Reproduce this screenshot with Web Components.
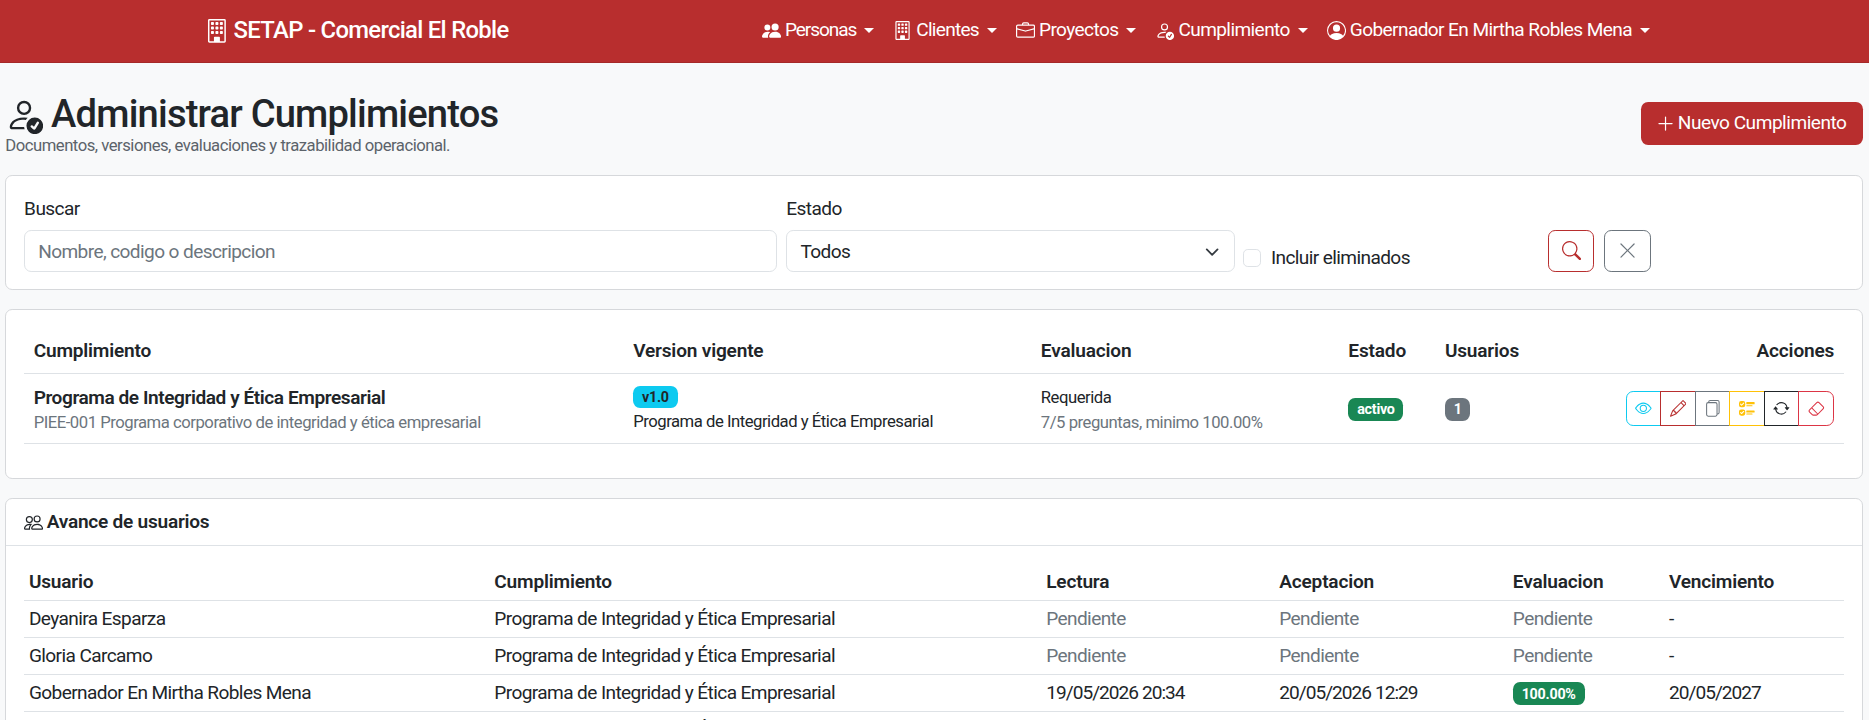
<!DOCTYPE html>
<html lang="es">
<head>
<meta charset="utf-8">
<title>SETAP - Administrar Cumplimientos</title>
<style>
  html { zoom: 1.19196; overflow: hidden; }
  body {
    margin: 0;
    background: #f8f9fa;
    color: #212529;
    font-family: Roboto, "Noto Sans", sans-serif;
    font-size: 16px;
    line-height: 1.5;
    letter-spacing: -.5px;
  }
</style>
</head>
<body>
<app-navbar>
  <nav-item icon="people-fill" style="letter-spacing:-.9px">Personas</nav-item>
  <nav-item icon="building" style="letter-spacing:-.6px">Clientes</nav-item>
  <nav-item icon="briefcase">Proyectos</nav-item>
  <nav-item icon="person-check">Cumplimiento</nav-item>
  <nav-item icon="person-circle">Gobernador En Mirtha Robles Mena</nav-item>
</app-navbar>
<main-page>
  <page-head></page-head>
  <filter-card></filter-card>
  <compliance-card></compliance-card>
  <progress-card></progress-card>
</main-page>

<script>
const ICONS = {
  'people-fill': 'M7 14s-1 0-1-1 1-4 5-4 5 3 5 4-1 1-1 1zm4-6a3 3 0 1 0 0-6 3 3 0 0 0 0 6m-5.784 6A2.24 2.24 0 0 1 5 13c0-1.355.68-2.75 1.936-3.72A6.3 6.3 0 0 0 5 9c-4 0-5 3-5 4s1 1 1 1zM4.5 8a2.5 2.5 0 1 0 0-5 2.5 2.5 0 0 0 0 5',
  'building': 'M4 2.5a.5.5 0 0 1 .5-.5h1a.5.5 0 0 1 .5.5v1a.5.5 0 0 1-.5.5h-1a.5.5 0 0 1-.5-.5zm3 0a.5.5 0 0 1 .5-.5h1a.5.5 0 0 1 .5.5v1a.5.5 0 0 1-.5.5h-1a.5.5 0 0 1-.5-.5zm3.5-.5a.5.5 0 0 0-.5.5v1a.5.5 0 0 0 .5.5h1a.5.5 0 0 0 .5-.5v-1a.5.5 0 0 0-.5-.5zM4 5.5a.5.5 0 0 1 .5-.5h1a.5.5 0 0 1 .5.5v1a.5.5 0 0 1-.5.5h-1a.5.5 0 0 1-.5-.5zM7.5 5a.5.5 0 0 0-.5.5v1a.5.5 0 0 0 .5.5h1a.5.5 0 0 0 .5-.5v-1a.5.5 0 0 0-.5-.5zm2.5.5a.5.5 0 0 1 .5-.5h1a.5.5 0 0 1 .5.5v1a.5.5 0 0 1-.5.5h-1a.5.5 0 0 1-.5-.5zM4.5 8a.5.5 0 0 0-.5.5v1a.5.5 0 0 0 .5.5h1a.5.5 0 0 0 .5-.5v-1a.5.5 0 0 0-.5-.5zm2.5.5a.5.5 0 0 1 .5-.5h1a.5.5 0 0 1 .5.5v1a.5.5 0 0 1-.5.5h-1a.5.5 0 0 1-.5-.5zm3.5-.5a.5.5 0 0 0-.5.5v1a.5.5 0 0 0 .5.5h1a.5.5 0 0 0 .5-.5v-1a.5.5 0 0 0-.5-.5z M2 1a1 1 0 0 1 1-1h10a1 1 0 0 1 1 1v14a1 1 0 0 1-1 1H3a1 1 0 0 1-1-1zm11 0H3v14h3v-2.5a.5.5 0 0 1 .5-.5h3a.5.5 0 0 1 .5.5V15h3z',
  'briefcase': 'M6.5 1A1.5 1.5 0 0 0 5 2.5V3H1.5A1.5 1.5 0 0 0 0 4.5v8A1.5 1.5 0 0 0 1.5 14h13a1.5 1.5 0 0 0 1.5-1.5v-8A1.5 1.5 0 0 0 14.5 3H11v-.5A1.5 1.5 0 0 0 9.5 1zm0 1h3a.5.5 0 0 1 .5.5V3H6v-.5a.5.5 0 0 1 .5-.5m1.886 6.914L15 7.151V12.5a.5.5 0 0 1-.5.5h-13a.5.5 0 0 1-.5-.5V7.15l6.614 1.764a1.5 1.5 0 0 0 .772 0M1.5 4h13a.5.5 0 0 1 .5.5v1.616L8.129 7.948a.5.5 0 0 1-.258 0L1 6.116V4.5a.5.5 0 0 1 .5-.5',
  'person-check': 'M12.5 16a3.5 3.5 0 1 0 0-7 3.5 3.5 0 0 0 0 7m1.679-4.493-1.335 2.226a.75.75 0 0 1-1.174.144l-.774-.773a.5.5 0 0 1 .708-.708l.547.548 1.17-1.951a.5.5 0 1 1 .858.514M11 5a3 3 0 1 1-6 0 3 3 0 0 1 6 0M8 7a2 2 0 1 0 0-4 2 2 0 0 0 0 4 M8.256 14a4.5 4.5 0 0 1-.229-1.004H3c.001-.246.154-.986.832-1.664C4.484 10.68 5.711 10 8 10q.39 0 .74.025c.226-.341.496-.65.804-.918Q8.844 9.002 8 9c-5 0-6 3-6 4s1 1 1 1z',
  'person-circle': 'M11 6a3 3 0 1 1-6 0 3 3 0 0 1 6 0 M0 8a8 8 0 1 1 16 0A8 8 0 0 1 0 8m8-7a7 7 0 0 0-5.468 11.37C3.242 11.226 4.805 10 8 10s4.757 1.225 5.468 2.37A7 7 0 0 0 8 1',
  'plus-lg': 'M8 2a.5.5 0 0 1 .5.5v5h5a.5.5 0 0 1 0 1h-5v5a.5.5 0 0 1-1 0v-5h-5a.5.5 0 0 1 0-1h5v-5A.5.5 0 0 1 8 2',
  'search': 'M11.742 10.344a6.5 6.5 0 1 0-1.397 1.398h-.001q.044.06.098.115l3.85 3.85a1 1 0 0 0 1.415-1.414l-3.85-3.85a1 1 0 0 0-.115-.1zM12 6.5a5.5 5.5 0 1 1-11 0 5.5 5.5 0 0 1 11 0',
  'x-lg': 'M2.146 2.854a.5.5 0 1 1 .708-.708L8 7.293l5.146-5.147a.5.5 0 0 1 .708.708L8.707 8l5.147 5.146a.5.5 0 0 1-.708.708L8 8.707l-5.146 5.147a.5.5 0 0 1-.708-.708L7.293 8z',
  'eye': 'M16 8s-3-5.5-8-5.5S0 8 0 8s3 5.5 8 5.5S16 8 16 8M1.173 8a13 13 0 0 1 1.66-2.043C4.12 4.668 5.88 3.5 8 3.5s3.879 1.168 5.168 2.457A13 13 0 0 1 14.828 8q-.086.13-.195.288c-.335.48-.83 1.12-1.465 1.755C11.879 11.332 10.119 12.5 8 12.5s-3.879-1.168-5.168-2.457A13 13 0 0 1 1.172 8z M8 5.5a2.5 2.5 0 1 0 0 5 2.5 2.5 0 0 0 0-5M4.5 8a3.5 3.5 0 1 1 7 0 3.5 3.5 0 0 1-7 0',
  'pencil': 'M12.146.146a.5.5 0 0 1 .708 0l3 3a.5.5 0 0 1 0 .708l-10 10a.5.5 0 0 1-.168.11l-5 2a.5.5 0 0 1-.65-.65l2-5a.5.5 0 0 1 .11-.168zM11.207 2.5 13.5 4.793 14.793 3.5 12.5 1.207zm1.586 3L10.5 3.207 4 9.707V10h.5a.5.5 0 0 1 .5.5v.5h.5a.5.5 0 0 1 .5.5v.5h.293zm-9.761 5.175-.106.106-1.528 3.821 3.821-1.528.106-.106A.5.5 0 0 1 5 12.5V12h-.5a.5.5 0 0 1-.5-.5V11h-.5a.5.5 0 0 1-.468-.325',
  'files': 'M13 0H6a2 2 0 0 0-2 2 2 2 0 0 0-2 2v10a2 2 0 0 0 2 2h7a2 2 0 0 0 2-2 2 2 0 0 0 2-2V2a2 2 0 0 0-2-2m0 13V4a2 2 0 0 0-2-2H5a1 1 0 0 1 1-1h7a1 1 0 0 1 1 1v10a1 1 0 0 1-1 1M3 4a1 1 0 0 1 1-1h7a1 1 0 0 1 1 1v10a1 1 0 0 1-1 1H4a1 1 0 0 1-1-1z',
  'ui-checks': 'M7 2.5a.5.5 0 0 1 .5-.5h7a.5.5 0 0 1 .5.5v1a.5.5 0 0 1-.5.5h-7a.5.5 0 0 1-.5-.5zM2 1a2 2 0 0 0-2 2v2a2 2 0 0 0 2 2h2a2 2 0 0 0 2-2V3a2 2 0 0 0-2-2zm0 8a2 2 0 0 0-2 2v2a2 2 0 0 0 2 2h2a2 2 0 0 0 2-2v-2a2 2 0 0 0-2-2zm.854-3.646a.5.5 0 0 1-.708 0l-1-1a.5.5 0 1 1 .708-.708l.646.647 1.646-1.647a.5.5 0 1 1 .708.708zm0 8a.5.5 0 0 1-.708 0l-1-1a.5.5 0 0 1 .708-.708l.646.647 1.646-1.647a.5.5 0 0 1 .708.708zM7 10.5a.5.5 0 0 1 .5-.5h7a.5.5 0 0 1 .5.5v1a.5.5 0 0 1-.5.5h-7a.5.5 0 0 1-.5-.5zm0-5a.5.5 0 0 1 .5-.5h5a.5.5 0 0 1 0 1h-5a.5.5 0 0 1-.5-.5m0 8a.5.5 0 0 1 .5-.5h5a.5.5 0 0 1 0 1h-5a.5.5 0 0 1-.5-.5',
  'arrow-repeat': 'M11.534 7h3.932a.25.25 0 0 1 .192.41l-1.966 2.36a.25.25 0 0 1-.384 0l-1.966-2.36a.25.25 0 0 1 .192-.41m-11 2h3.932a.25.25 0 0 0 .192-.41L2.692 6.23a.25.25 0 0 0-.384 0L.342 8.59A.25.25 0 0 0 .534 9 M8 3c-1.552 0-2.94.707-3.857 1.818a.5.5 0 1 1-.771-.636A6.002 6.002 0 0 1 13.917 7H12.9A5 5 0 0 0 8 3M3.1 9a5.002 5.002 0 0 0 8.757 2.182.5.5 0 1 1 .771.636A6.002 6.002 0 0 1 2.083 9z',
  'eraser': 'M8.086 2.207a2 2 0 0 1 2.828 0l3.879 3.879a2 2 0 0 1 0 2.828l-5.5 5.5A2 2 0 0 1 7.879 15H5.12a2 2 0 0 1-1.414-.586l-2.5-2.5a2 2 0 0 1 0-2.828zm2.121.707a1 1 0 0 0-1.414 0L4.16 7.547l5.293 5.293 4.633-4.633a1 1 0 0 0 0-1.414zM8.746 13.547 3.453 8.254 1.914 9.793a1 1 0 0 0 0 1.414l2.5 2.5a1 1 0 0 0 .707.293H7.88a1 1 0 0 0 .707-.293z',
  'people': 'M15 14s1 0 1-1-1-4-5-4-5 3-5 4 1 1 1 1zm-7.978-1L7 12.996c.001-.264.167-1.03.76-1.72C8.312 10.629 9.282 10 11 10c1.717 0 2.687.63 3.24 1.276.593.69.758 1.457.76 1.72l-.008.002-.014.002zM11 7a2 2 0 1 0 0-4 2 2 0 0 0 0 4m3-2a3 3 0 1 1-6 0 3 3 0 0 1 6 0M6.936 9.28a6 6 0 0 0-1.23-.247A7 7 0 0 0 5 9c-4 0-5 3-5 4q0 1 1 1h4.216A2.24 2.24 0 0 1 5 13c0-1.01.377-2.042 1.09-2.904.243-.294.526-.569.846-.816M4.92 10A5.5 5.5 0 0 0 4 13H1c0-.26.164-1.03.76-1.724.545-.636 1.492-1.256 3.16-1.275ZM1.5 5.5a3 3 0 1 1 6 0 3 3 0 0 1-6 0m3-2a2 2 0 1 0 0 4 2 2 0 0 0 0-4'
};

class BiIcon extends HTMLElement {
  connectedCallback() {
    const size = this.getAttribute('size') || 16;
    const root = this.attachShadow({mode: 'open'});
    root.innerHTML = `
      <style>
        :host { display: inline-flex; flex: none; }
        svg { display: block; fill: currentColor; }
      </style>
      <svg width="${size}" height="${size}" viewBox="0 0 16 16"><path fill-rule="evenodd" d="${ICONS[this.getAttribute('name')]}"/></svg>`;
  }
}
customElements.define('bi-icon', BiIcon);

class StatusBadge extends HTMLElement {
  constructor() {
    super();
    this.attachShadow({mode: 'open'}).innerHTML = `
      <style>
        :host {
          display: inline-block;
          background: var(--bg, #198754);
          color: var(--fg, #fff);
          font-size: 12px;
          font-weight: 700;
          line-height: 1;
          letter-spacing: -.2px;
          padding: 3.5px 7.4px;
          border-radius: 6px;
          white-space: nowrap;
        }
      </style>
      <slot></slot>`;
  }
}
customElements.define('status-badge', StatusBadge);

const navbarTmpl = document.createElement('template');
navbarTmpl.innerHTML = `
  <style>
    :host {
      display: flex;
      align-items: center;
      height: 52.5px;
      box-sizing: border-box;
      padding-left: 172px;
      background: #b82e2e;
      border-bottom: 1px solid #a52929;
      color: #fff;
    }
    .brand {
      display: flex;
      align-items: center;
      gap: 4px;
      width: 459px;
      flex: none;
      font-size: 20px;
      font-weight: 500;
      letter-spacing: -.58px;
    }
    nav { display: flex; align-items: center; }
  </style>
  <div class="brand"><bi-icon name="building" size="20"></bi-icon><span>SETAP - Comercial El Roble</span></div>
  <nav><slot></slot></nav>`;
class AppNavbar extends HTMLElement {
  constructor() {
    super();
    this.attachShadow({mode: 'open'}).appendChild(navbarTmpl.content.cloneNode(true));
  }
}
customElements.define('app-navbar', AppNavbar);

class NavItem extends HTMLElement {
  connectedCallback() {
    const root = this.attachShadow({mode: 'open'});
    root.innerHTML = `
      <style>
        :host { display: flex; align-items: center; gap: 3.5px; padding: 8px; white-space: nowrap; }
        .caret {
          width: 0; height: 0;
          margin-left: 3px;
          border-top: 4.8px solid #fff;
          border-left: 4.8px solid transparent;
          border-right: 4.8px solid transparent;
        }
      </style>
      <bi-icon name="${this.getAttribute('icon')}"></bi-icon><slot></slot><span class="caret"></span>`;
  }
}
customElements.define('nav-item', NavItem);

class MainPage extends HTMLElement {
  constructor() {
    super();
    this.attachShadow({mode: 'open'}).innerHTML = `
      <style>
        :host { display: flex; flex-direction: column; gap: 16px; padding: 0 5.4px 0 4.4px; }
      </style>
      <slot></slot>`;
  }
}
customElements.define('main-page', MainPage);

class PageHead extends HTMLElement {
  constructor() {
    super();
    this.attachShadow({mode: 'open'}).innerHTML = `
      <style>
        :host { display: flex; justify-content: space-between; align-items: flex-start; box-sizing: border-box; padding-top: 25.5px; height: 78.5px; }
        h1 {
          display: flex; align-items: center; gap: 6.5px;
          margin: 0;
          font-size: 32px; font-weight: 500; line-height: 36.5px;
          letter-spacing: -.68px;
        }
        p { margin: 0; font-size: 14px; line-height: 17px; color: #5c636a; letter-spacing: -.41px; }
        .new {
          display: flex; align-items: center; gap: 2px;
          margin-top: 7.5px;
          height: 36px;
          box-sizing: border-box;
          padding: 0 13.5px 0 12.5px;
          border-radius: 6px;
          background: #b82e2e;
          color: #fff;
          white-space: nowrap;
          letter-spacing: -.4px;
        }
      </style>
      <div>
        <h1><bi-icon name="person-check" size="32"></bi-icon><span>Administrar Cumplimientos</span></h1>
        <p>Documentos, versiones, evaluaciones y trazabilidad operacional.</p>
      </div>
      <div class="new"><bi-icon name="plus-lg"></bi-icon><span>Nuevo Cumplimiento</span></div>`;
  }
}
customElements.define('page-head', PageHead);

const cardCss = `
  :host { display: block; background: #fff; border: 1px solid #d6d8db; border-radius: 6px; box-sizing: border-box; }
`;

class FilterCard extends HTMLElement {
  constructor() {
    super();
    this.attachShadow({mode: 'open'}).innerHTML = `
      <style>
        ${cardCss}
        :host { padding: 15.5px 15px 15px; }
        .grid { display: grid; grid-template-columns: 632px 376px 248px 1fr; column-gap: 7.5px; align-items: end; }
        label { display: block; margin-bottom: 5.5px; line-height: 24px; }
        .ctl {
          box-sizing: border-box; height: 35px; padding: 2px 12px 0 11px;
          border: 1px solid #dee2e6; border-radius: 6px;
          display: flex; align-items: center; justify-content: space-between;
        }
        .ph { color: #6c757d; }
        .check { display: flex; align-items: center; gap: 8px; height: 23px; margin-bottom: 0; }
        .box { width: 15px; height: 15px; box-sizing: border-box; border: 1px solid #dee2e6; border-radius: 4px; }
        .btns { display: flex; gap: 8px; }
        .btn {
          width: 39px; height: 35px; box-sizing: border-box;
          border: 1px solid currentColor; border-radius: 6px;
          display: flex; align-items: center; justify-content: center;
        }
      </style>
      <div class="grid">
        <div><label>Buscar</label><div class="ctl ph">Nombre, codigo o descripcion</div></div>
        <div><label>Estado</label><div class="ctl"><span>Todos</span>
          <svg width="12" height="12" viewBox="0 0 16 16"><path fill="none" stroke="#343a40" stroke-linecap="round" stroke-linejoin="round" stroke-width="2" d="m2 5 6 6 6-6"/></svg></div></div>
        <div class="check"><span class="box"></span><span>Incluir eliminados</span></div>
        <div class="btns">
          <div class="btn" style="color:#b82e2e"><bi-icon name="search"></bi-icon></div>
          <div class="btn" style="color:#6c757d"><bi-icon name="x-lg"></bi-icon></div>
        </div>
      </div>`;
  }
}
customElements.define('filter-card', FilterCard);

const tableCss = `
  table { width: 100%; border-collapse: collapse; table-layout: fixed; }
  th { text-align: left; font-weight: 600; letter-spacing: -.15px; }
  th, td { border-bottom: 1px solid #dee2e6; }
`;

class ActionGroup extends HTMLElement {
  constructor() {
    super();
    const btns = [['eye','#0dcaf0'],['pencil','#b82e2e'],['files','#6c757d'],['ui-checks','#ffc107'],['arrow-repeat','#212529'],['eraser','#dc3545']];
    this.attachShadow({mode: 'open'}).innerHTML = `
      <style>
        :host { display: inline-flex; vertical-align: middle; }
        .b {
          width: 30px; height: 29px; box-sizing: border-box;
          border: 1px solid currentColor; margin-left: -1px;
          display: flex; align-items: center; justify-content: center;
          background: #fff;
        }
        .b:first-of-type { margin-left: 0; border-radius: 6px 0 0 6px; }
        .b:last-of-type { border-radius: 0 6px 6px 0; }
      </style>
      ${btns.map(([n, c]) => `<div class="b" style="color:${c}"><bi-icon name="${n}" size="14"></bi-icon></div>`).join('')}`;
  }
}
customElements.define('action-group', ActionGroup);

class ComplianceCard extends HTMLElement {
  constructor() {
    super();
    this.attachShadow({mode: 'open'}).innerHTML = `
      <style>
        ${cardCss}
        :host { padding: 16px 15px 28.5px; }
        ${tableCss}
        th { height: 37px; padding: 0 8px; box-sizing: border-box; }
        td { height: 59px; padding: 0 8px; box-sizing: border-box; vertical-align: middle; }
        td.two { padding-top: 2px; }
        .name { font-weight: 600; line-height: 21px; letter-spacing: -.36px; }
        small { display: block; font-size: 14px; line-height: 21px; letter-spacing: -.4px; }
        .muted { color: #6c757d; }
        status-badge.v { --bg: #0dcaf0; --fg: #212529; display: block; width: fit-content; margin-bottom: 1px; }
        .right { text-align: right; }
      </style>
      <table>
        <colgroup><col style="width:503px"><col style="width:342px"><col style="width:258px"><col style="width:81px"><col style="width:120px"><col></colgroup>
        <thead><tr><th>Cumplimiento</th><th>Version vigente</th><th>Evaluacion</th><th>Estado</th><th>Usuarios</th><th class="right">Acciones</th></tr></thead>
        <tbody><tr>
          <td class="two"><div class="name">Programa de Integridad y Ética Empresarial</div><small class="muted">PIEE-001 Programa corporativo de integridad y ética empresarial</small></td>
          <td class="two"><status-badge class="v">v1.0</status-badge><small>Programa de Integridad y Ética Empresarial</small></td>
          <td class="two"><small>Requerida</small><small class="muted">7/5 preguntas, minimo 100.00%</small></td>
          <td><status-badge>activo</status-badge></td>
          <td><status-badge style="--bg:#6c757d">1</status-badge></td>
          <td class="right"><action-group></action-group></td>
        </tr></tbody>
      </table>`;
  }
}
customElements.define('compliance-card', ComplianceCard);

class ProgressCard extends HTMLElement {
  constructor() {
    super();
    const prog = 'Programa de Integridad y Ética Empresarial';
    const pend = '<span class="muted">Pendiente</span>';
    const num = s => `<span class="num">${s}</span>`;
    const rows = [
      ['Deyanira Esparza', prog, pend, pend, pend, '-'],
      ['Gloria Carcamo', prog, pend, pend, pend, '-'],
      ['Gobernador En Mirtha Robles Mena', prog, num('19/05/2026 20:34'), num('20/05/2026 12:29'), '<status-badge>100.00%</status-badge>', num('20/05/2027')],
      ['', prog, '', '', '', '']
    ];
    this.attachShadow({mode: 'open'}).innerHTML = `
      <style>
        ${cardCss}
        .head { display: flex; align-items: center; gap: 3px; height: 38px; padding-left: 15px; border-bottom: 1px solid #dee2e6; font-weight: 600; font-size: 16px; letter-spacing: -.2px; }
        .body { padding: 15px; }
        ${tableCss}
        th, td { height: 31px; padding: 0 4px; box-sizing: border-box; white-space: nowrap; }
        .muted { color: #6c757d; }
        .num { letter-spacing: -.8px; }
      </style>
      <div class="head"><bi-icon name="people"></bi-icon><span>Avance de usuarios</span></div>
      <div class="body"><table>
        <colgroup><col style="width:390.5px"><col style="width:463px"><col style="width:195.5px"><col style="width:196px"><col style="width:131px"><col></colgroup>
        <thead><tr><th>Usuario</th><th>Cumplimiento</th><th>Lectura</th><th>Aceptacion</th><th>Evaluacion</th><th>Vencimiento</th></tr></thead>
        <tbody>${rows.map(r => `<tr>${r.map(c => `<td>${c}</td>`).join('')}</tr>`).join('')}</tbody>
      </table></div>`;
  }
}
customElements.define('progress-card', ProgressCard);
</script>
</body>
</html>
